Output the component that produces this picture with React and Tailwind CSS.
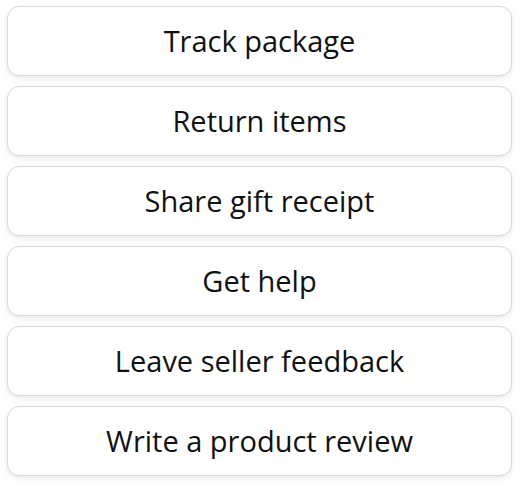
export default function App() {
  const items = [
    "Track package",
    "Return items",
    "Share gift receipt",
    "Get help",
    "Leave seller feedback",
    "Write a product review",
  ];
  return (
    <div className="w-[526px] h-[486px] bg-white pt-[6px] pl-[7px] pr-[14px] flex flex-col gap-[10px]" style={{ fontFamily: '"Open Sans", "Noto Sans", sans-serif' }}>
      {items.map((t) => (
        <button
          key={t}
          className="h-[70px] w-full rounded-[12px] border border-[#d5d9d9] bg-white shadow-[0_2px_5px_0_rgba(213,217,217,0.5)] text-[#0f1111] text-[29px] font-medium leading-none flex items-center justify-center pb-[2px]"
        >
          {t}
        </button>
      ))}
    </div>
  );
}
